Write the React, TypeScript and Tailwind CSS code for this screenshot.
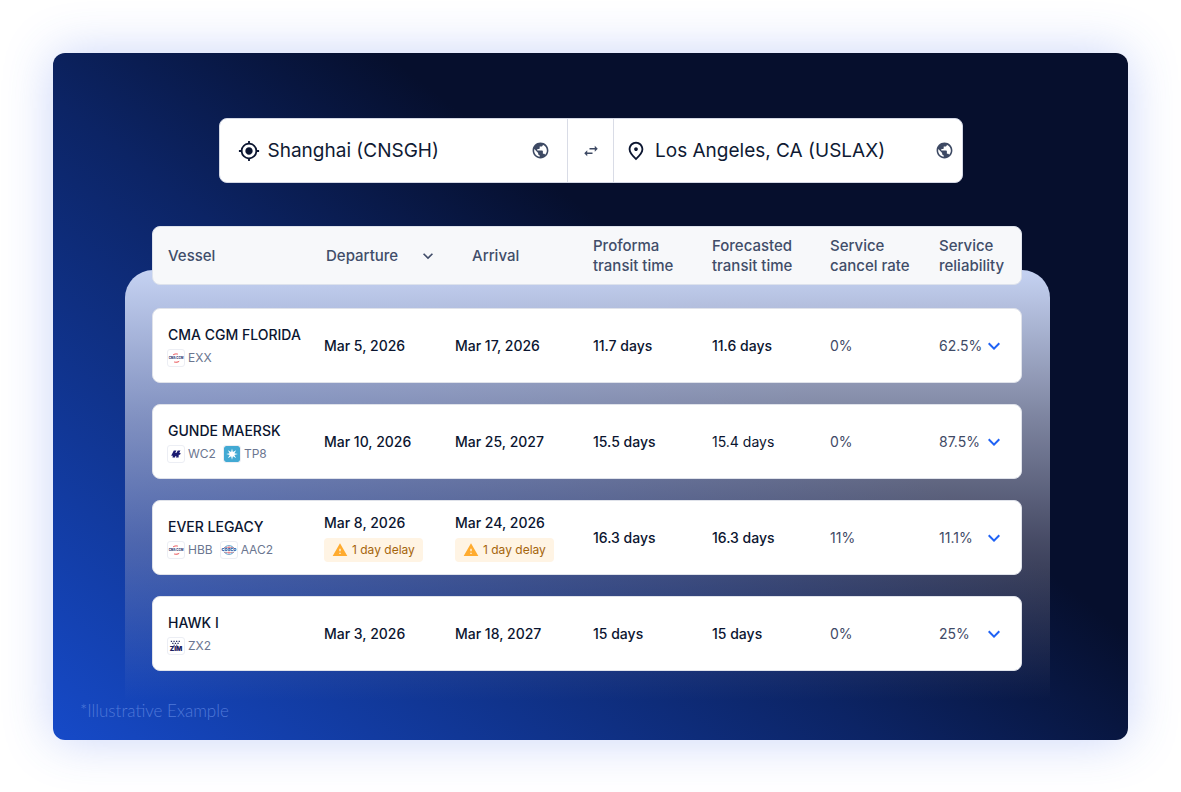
import { useState } from "react";
import type { ReactNode } from "react";
import type { IconType } from "react-icons";
import {
  MdMyLocation,
  MdOutlinePlace,
  MdPublic,
  MdSwapHoriz,
  MdWarning,
  MdKeyboardArrowDown,
} from "react-icons/md";

type Carrier = "cma" | "hapag" | "maersk" | "cosco" | "zim";

interface Stop {
  date: string;
  delay?: string;
}

interface Sailing {
  vessel: string;
  services: { carrier: Carrier; code: string }[];
  departure: Stop;
  arrival: Stop;
  proforma: string;
  forecasted: string;
  early?: boolean;
  cancelRate: string;
  reliability: string;
}

const SAILINGS: Sailing[] = [
  {
    vessel: "CMA CGM FLORIDA",
    services: [{ carrier: "cma", code: "EXX" }],
    departure: { date: "Mar 5, 2026" },
    arrival: { date: "Mar 17, 2026" },
    proforma: "11.7 days",
    forecasted: "11.6 days",
    cancelRate: "0%",
    reliability: "62.5%",
  },
  {
    vessel: "GUNDE MAERSK",
    services: [
      { carrier: "hapag", code: "WC2" },
      { carrier: "maersk", code: "TP8" },
    ],
    departure: { date: "Mar 10, 2026" },
    arrival: { date: "Mar 25, 2027" },
    proforma: "15.5 days",
    forecasted: "15.4 days",
    early: true,
    cancelRate: "0%",
    reliability: "87.5%",
  },
  {
    vessel: "EVER LEGACY",
    services: [
      { carrier: "cma", code: "HBB" },
      { carrier: "cosco", code: "AAC2" },
    ],
    departure: { date: "Mar 8, 2026", delay: "1 day delay" },
    arrival: { date: "Mar 24, 2026", delay: "1 day delay" },
    proforma: "16.3 days",
    forecasted: "16.3 days",
    cancelRate: "11%",
    reliability: "11.1%",
  },
  {
    vessel: "HAWK I",
    services: [{ carrier: "zim", code: "ZX2" }],
    departure: { date: "Mar 3, 2026" },
    arrival: { date: "Mar 18, 2027" },
    proforma: "15 days",
    forecasted: "15 days",
    cancelRate: "0%",
    reliability: "25%",
  },
];

// Header and body rows share the same column tracks
const ROW =
  "grid grid-cols-[156fr_131fr_138fr_119fr_118fr_109fr_67fr] items-center rounded-lg border px-[15px]";

const LOGOS: Record<Carrier, ReactNode> = {
  cma: (
    <>
      <path d="M5.200 4.800C6.500 4 8 3.700 9.800 4.100" stroke="#e5353a" strokeWidth=".9" fill="none" />
      <path d="M6.200 12C8 12.500 10 12.200 11.200 11.300" stroke="#e5353a" strokeWidth=".9" fill="none" />
      <text x="8" y="9" fontSize="2.900" fontWeight="700" textAnchor="middle" fill="#1c2c6b">
        CMA CGM
      </text>
    </>
  ),
  hapag: (
    <path
      d="M5.800 4.600h2.600L7.300 7h1l1.500-2.400h2.600L11.300 7h1.400L12 8.800h-1.200l-.2 2.600H7.800l.7-1.500h-1l-.6 1.500H4.400l.5-1.700H3.200z"
      fill="#1a1a70"
    />
  ),
  maersk: (
    <>
      <rect width="16" height="16" fill="#42a9d3" />
      <path
        d="M8 2.400l.9 3.700 3.300-1.900-1.800 3.100 3.400.8-3.400.9 1.700 3.200-3.100-1.900L8 13.800l-.9-3.500-3.200 1.900 1.800-3.200-3.500-.9 3.400-.8-1.700-3.100 3.200 1.900z"
        fill="#fff"
      />
    </>
  ),
  cosco: (
    <>
      <ellipse cx="8" cy="8" rx="5.400" ry="4.400" stroke="#5aa3cf" strokeWidth=".9" fill="none" />
      <path d="M8 3.600v8.800M3.400 5.600h9.200M3.400 10.400h9.200" stroke="#e0616b" strokeWidth=".7" />
      <path
        d="M5.600 4.400c-1 2-1 5.200 0 7.200M10.400 4.400c1 2 1 5.200 0 7.200"
        stroke="#5aa3cf"
        strokeWidth=".6"
        fill="none"
      />
      <rect x="1" y="6.500" width="14" height="3" rx="1" fill="#fff" />
      <text x="8" y="9.400" fontSize="4" fontWeight="900" textAnchor="middle" fill="#1d5ba6">
        COSCO
      </text>
    </>
  ),
  zim: (
    <>
      <path
        d="M2.800 3.400h10.400M4.200 5.400h7.800M5.500 7.200h5.200"
        stroke="#2a2f66"
        strokeWidth="1.100"
        strokeDasharray="1.300 1.300"
      />
      <text x="8" y="13.400" fontSize="6.500" fontWeight="900" textAnchor="middle" fill="#1b2060">
        ZIM
      </text>
    </>
  ),
};

function CarrierLogo({ carrier }: { carrier: Carrier }) {
  return (
    <svg
      viewBox="0 0 16 16"
      className="size-4 shrink-0 rounded-xs outline outline-[#eceef4]"
      aria-hidden="true"
    >
      {LOGOS[carrier]}
    </svg>
  );
}

interface PortFieldProps {
  id: string;
  label: string;
  icon: IconType;
  value: string;
  onChange: (value: string) => void;
  className: string;
}

function PortField({ id, label, icon: Icon, value, onChange, className }: PortFieldProps) {
  return (
    <div className={`flex min-w-0 items-center gap-2 ${className}`}>
      <label htmlFor={id} className="shrink-0 text-[#0b1530]">
        <Icon className="size-[22px]" role="img" aria-label={label} />
      </label>
      <input
        id={id}
        type="text"
        value={value}
        onChange={(e) => onChange(e.target.value)}
        className="h-10 min-w-0 flex-1 bg-transparent text-[19px] text-[#0f1a33] outline-none"
      />
      <MdPublic className="size-[19px] shrink-0 text-[#3d4963]" aria-hidden="true" />
    </div>
  );
}

function StopCell({ stop }: { stop: Stop }) {
  return (
    <td className="flex flex-col items-start gap-[5px] font-medium">
      {stop.date}
      {stop.delay && (
        <span className="flex h-6 items-center gap-1 rounded-sm bg-[#fff4e4] px-2 text-xs font-normal text-[#a5650b]">
          <MdWarning className="size-4 text-[#ffab2e]" aria-hidden="true" />
          {stop.delay}
        </span>
      )}
    </td>
  );
}

export default function App() {
  const [origin, setOrigin] = useState("Shanghai (CNSGH)");
  const [destination, setDestination] = useState("Los Angeles, CA (USLAX)");

  function swapPorts() {
    setOrigin(destination);
    setDestination(origin);
  }

  return (
    <div className="bg-white p-[53px] pb-[52px] font-['Inter',sans-serif]">
      <main className="rounded-xl bg-[linear-gradient(38deg,#164ac8_0%,#0c2465_42%,#060f2d_62%)] pt-[65px] pb-[19px] shadow-[0_0_50px_rgba(60,100,235,0.28)]">
        {/* Port search */}
        <form
          className="mx-auto grid h-[65px] w-full max-w-[744px] grid-cols-[1fr_47px_1fr] rounded-lg border border-[#d3d7e4] bg-white"
          onSubmit={(e) => e.preventDefault()}
        >
          <PortField
            id="origin"
            label="Origin port"
            icon={MdMyLocation}
            value={origin}
            onChange={setOrigin}
            className="pr-[17px] pl-[18px]"
          />
          <button
            type="button"
            aria-label="Swap ports"
            onClick={swapPorts}
            className="flex items-center justify-center border-x border-[#d9dce6] text-[#3d4963]"
          >
            <MdSwapHoriz className="size-[18px]" />
          </button>
          <PortField
            id="destination"
            label="Destination port"
            icon={MdOutlinePlace}
            value={destination}
            onChange={setDestination}
            className="pr-2 pl-[11px]"
          />
        </form>

        {/* Sailings: the header card hangs over the top edge of the fading panel */}
        <section className="mt-[87px] mr-[78px] ml-[72px] flow-root rounded-t-[28px] bg-[linear-gradient(180deg,#c5d2f2_0%,rgba(190,196,222,0.65)_34%,rgba(184,180,200,0.36)_63%,rgba(184,180,200,0)_100%)] pr-7 pb-[30px] pl-[27px]">
          <table className="-mt-11 block text-sm leading-5 text-[#0b1530]">
            <thead className="block">
              <tr
                className={`${ROW} mb-[23px] h-[59px] border-[#dde2ec] bg-[#f7f8fa] text-left text-[15px] text-[#414d69]`}
              >
                <th className="font-medium">Vessel</th>
                <th className="pl-0.5 font-medium">
                  <button type="button" className="flex items-center gap-5">
                    Departure
                    <MdKeyboardArrowDown className="size-5" aria-hidden="true" />
                  </button>
                </th>
                <th className="pl-[17px] font-medium">Arrival</th>
                <th className="font-medium">
                  Proforma <br />
                  transit time
                </th>
                <th className="font-medium">
                  Forecasted <br />
                  transit time
                </th>
                <th className="font-medium">
                  Service <br />
                  cancel rate
                </th>
                <th className="font-medium">
                  Service <br />
                  reliability
                </th>
              </tr>
            </thead>
            <tbody className="flex flex-col gap-[21px]">
              {SAILINGS.map((s) => (
                <tr key={s.vessel} className={`${ROW} h-[75px] border-[#dfe2ea] bg-white`}>
                  <td>
                    <div className="font-medium">{s.vessel}</div>
                    <div className="mt-[5px] flex gap-2 text-xs text-[#6b7690]">
                      {s.services.map((service) => (
                        <span key={service.code} className="flex items-center gap-1">
                          <CarrierLogo carrier={service.carrier} />
                          {service.code}
                        </span>
                      ))}
                    </div>
                  </td>
                  <StopCell stop={s.departure} />
                  <StopCell stop={s.arrival} />
                  <td className="font-medium">{s.proforma}</td>
                  <td className={s.early ? "font-normal" : "font-medium"}>{s.forecasted}</td>
                  <td className="text-[#3f4a66]">{s.cancelRate}</td>
                  <td className="flex items-center justify-between text-[#3f4a66]">
                    {s.reliability}
                    <button
                      type="button"
                      aria-label={`Show details for ${s.vessel}`}
                      className="-ml-1 shrink-0 text-[#1f62f5]"
                    >
                      <MdKeyboardArrowDown className="size-6" />
                    </button>
                  </td>
                </tr>
              ))}
            </tbody>
          </table>
        </section>

        <p className="ml-[27px] font-['Lato',sans-serif] text-[17px] leading-5 font-light text-[#4f78d8]">
          *Illustrative Example
        </p>
      </main>
    </div>
  );
}
